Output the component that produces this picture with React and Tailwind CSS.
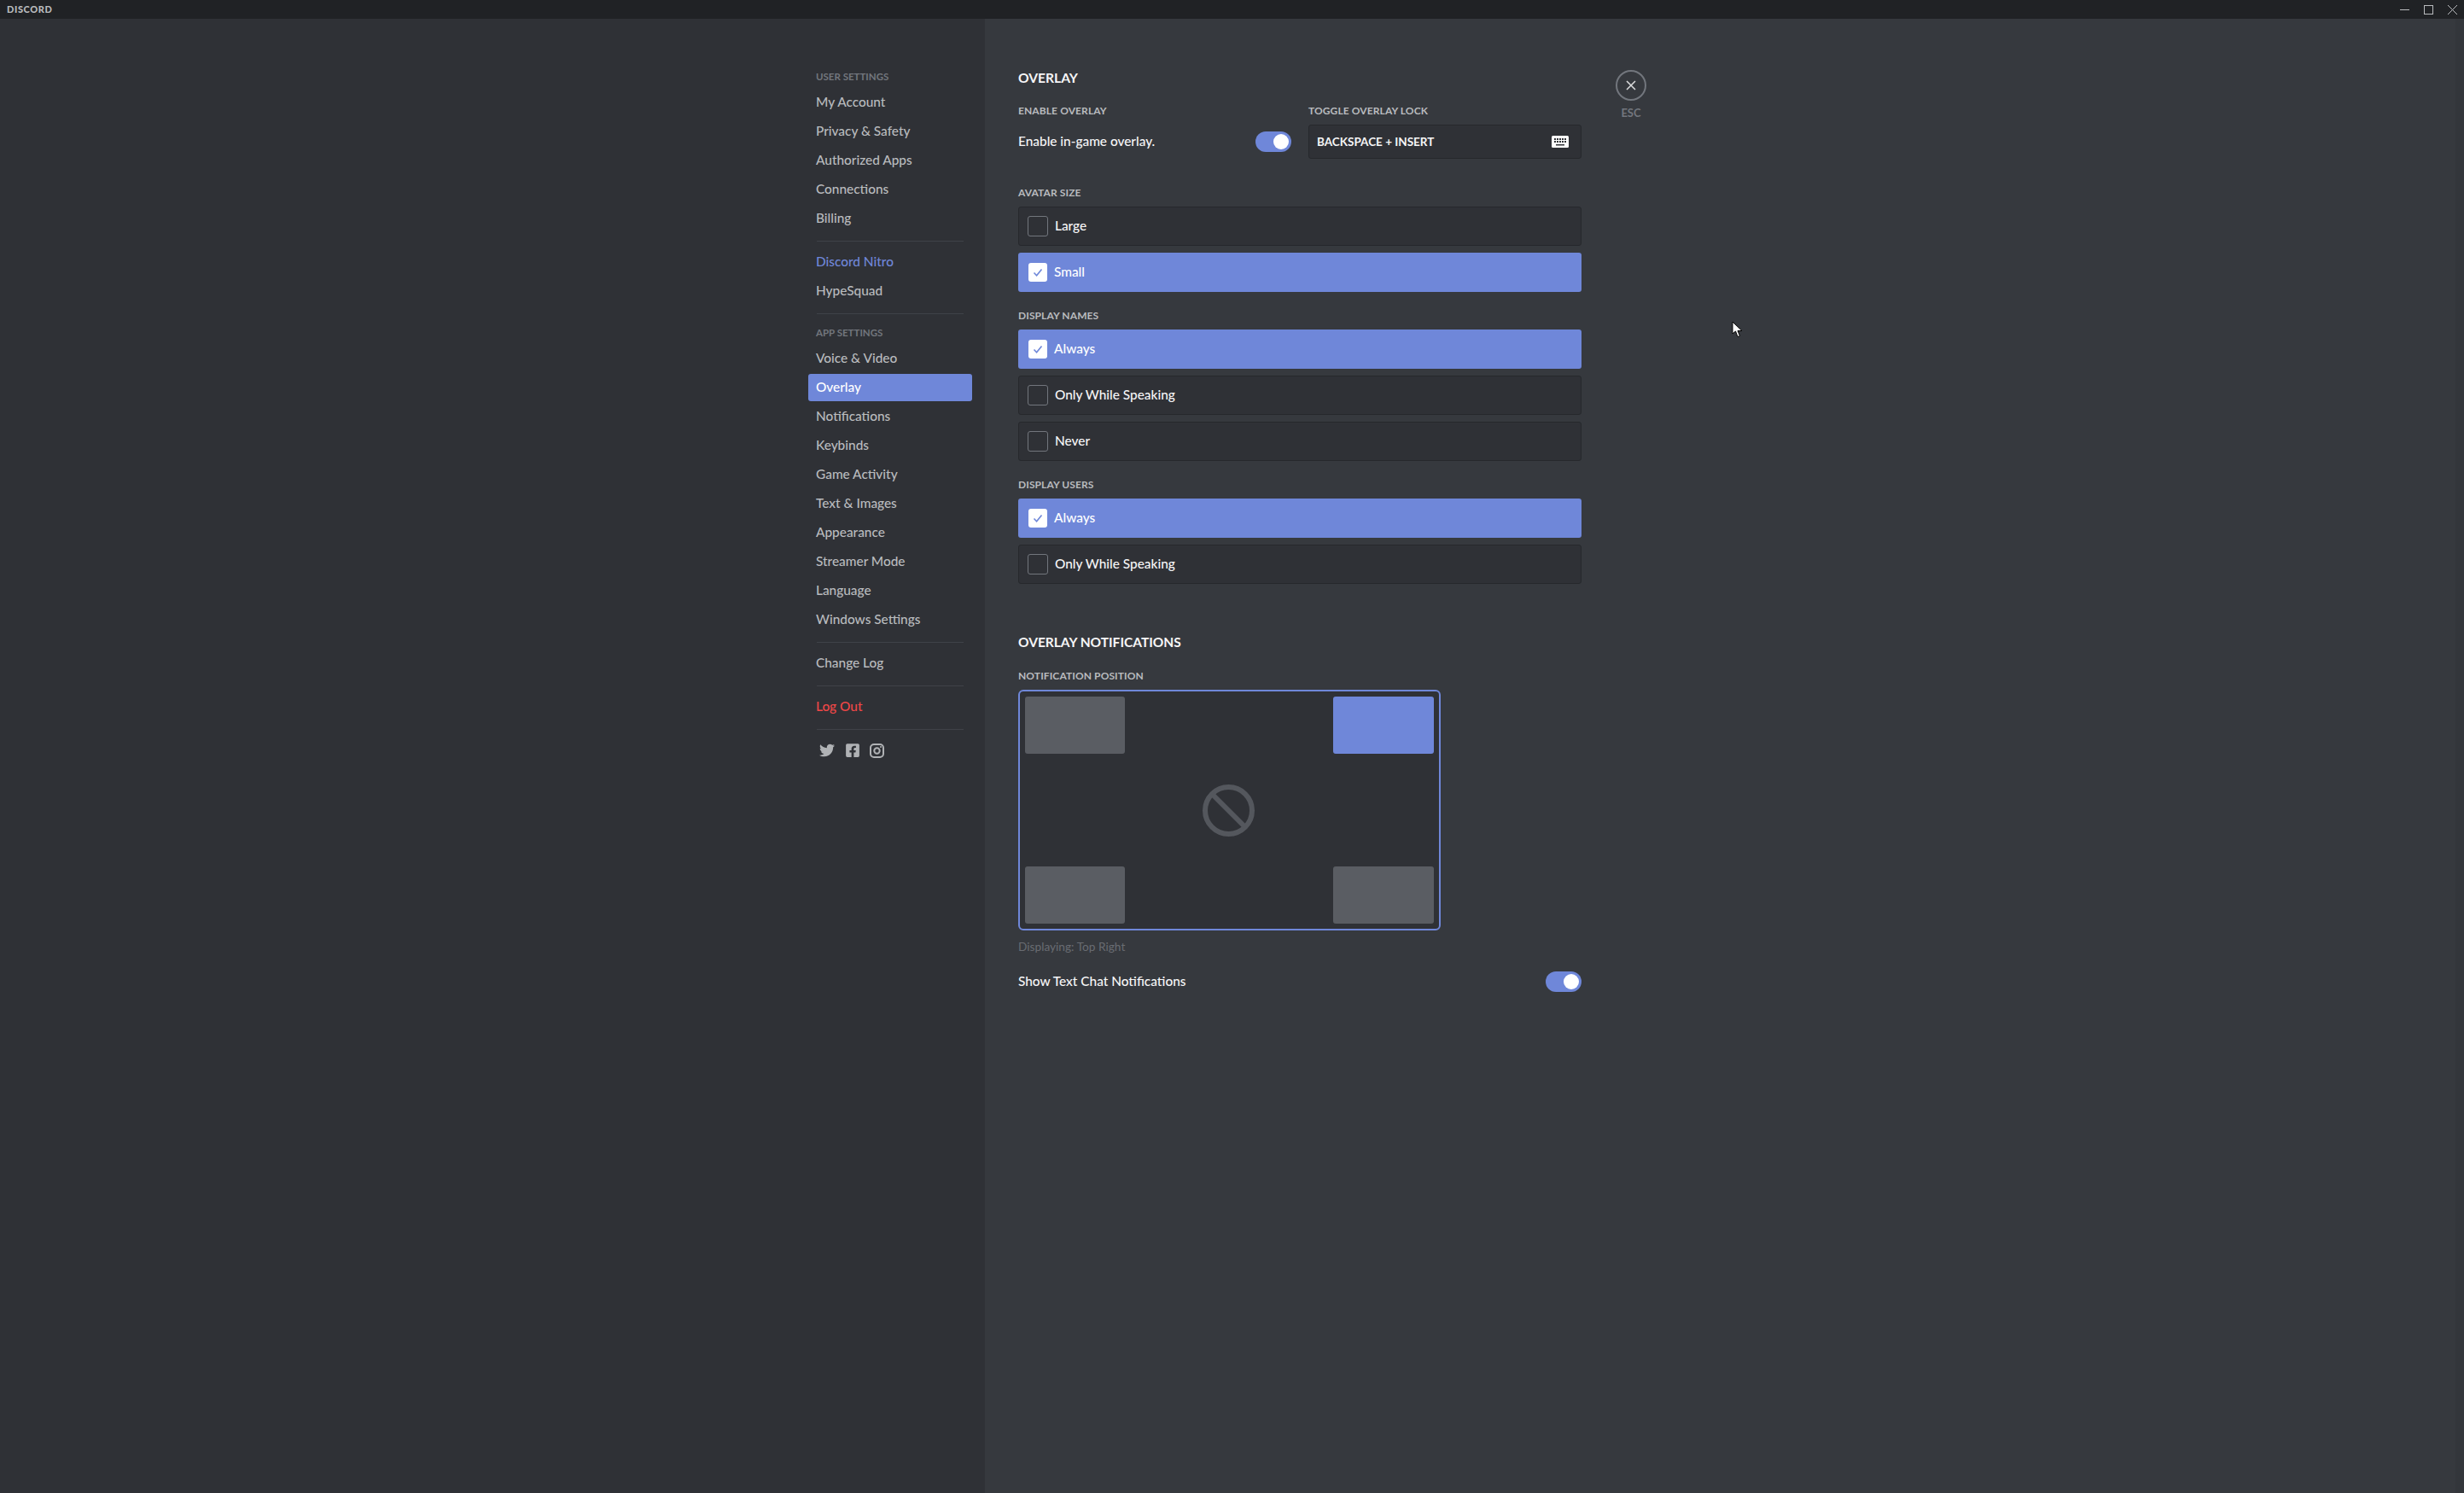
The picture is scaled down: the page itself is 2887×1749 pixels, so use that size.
import { FaTwitter, FaFacebookSquare } from "react-icons/fa";

const font = "font-['Lato','Noto_Sans',sans-serif]";

const userItems = ["My Account", "Privacy & Safety", "Authorized Apps", "Connections", "Billing"];
const appItems = [
  "Voice & Video",
  "Overlay",
  "Notifications",
  "Keybinds",
  "Game Activity",
  "Text & Images",
  "Appearance",
  "Streamer Mode",
  "Language",
  "Windows Settings",
];

const Divider = () => <div className="mx-[10px] my-2 h-px shrink-0 bg-[#3f4248]" />;

const SideHeader = ({ children }) => (
  <div className="flex h-7 items-center pl-[9px] text-[11.5px] font-bold uppercase text-[#72767d]">
    {children}
  </div>
);

const SideItem = ({ label, active, color = "text-[#b9bbbe]" }) => (
  <div
    className={`mb-[2px] flex h-8 items-center rounded-[3px] pb-px pl-[9px] text-[15.4px] font-medium ${
      active ? "bg-[#6f87d9] text-white" : color
    }`}
  >
    {label}
  </div>
);

const Label = ({ children }) => (
  <div className="flex h-4 items-center text-[12px] font-bold uppercase tracking-[0.1px] text-[#b9bbbe]">
    {children}
  </div>
);

const Toggle = () => (
  <div className="flex h-6 w-[42px] items-center justify-end rounded-full bg-[#6f87d9] pr-[3px]">
    <div className="size-[18px] rounded-full bg-white" />
  </div>
);

const Radio = ({ label, checked }) => (
  <div
    className={`mb-2 flex h-[46px] items-center rounded-[3px] text-[15.4px] font-medium ${
      checked ? "bg-[#6f87d9] pl-[12px] text-white" : "border border-[#26282c] bg-[#2f3136] pl-[10px] text-[#f6f6f7]"
    }`}
  >
    {checked ? (
      <div className="flex size-[22px] items-center justify-center rounded-[3px] bg-white">
        <svg width="14" height="14" viewBox="0 0 14 14" fill="none">
          <path d="M2.5 7.5 5.6 10.8 11.5 3.5" stroke="#6f87d9" strokeWidth="1.6" />
        </svg>
      </div>
    ) : (
      <div className="size-6 rounded-[3px] border border-[#72767d]" />
    )}
    <span className={`pb-px ${checked ? "ml-[8px]" : "ml-2"}`}>{label}</span>
  </div>
);

const PositionBox = ({ active }) => (
  <div className={`h-[67px] rounded-[3px] ${active ? "bg-[#6f87d9]" : "bg-[#5a5d63]"}`} />
);

const WinButton = ({ children }) => (
  <div className="flex h-[22px] w-[28px] items-center justify-center">{children}</div>
);

export default function App() {
  return (
    <div className={`relative flex h-[1749px] w-[2887px] flex-col overflow-hidden bg-[#36393e] ${font}`}>
      <div className="flex h-[22px] shrink-0 items-center justify-between bg-[#202225] pl-2">
        <div className="text-[11px] font-black uppercase tracking-[0.6px] text-[#b9bbbe]">Discord</div>
        <div className="flex">
          <WinButton>
            <svg width="11" height="11" viewBox="0 0 11 11">
              <path d="M0 5.5H11" stroke="#b9bbbe" strokeWidth="1" />
            </svg>
          </WinButton>
          <WinButton>
            <svg width="11" height="11" viewBox="0 0 11 11" fill="none">
              <rect x="0.5" y="0.5" width="10" height="10" stroke="#b9bbbe" />
            </svg>
          </WinButton>
          <WinButton>
            <svg width="11" height="11" viewBox="0 0 11 11">
              <path d="M0 0 11 11M11 0 0 11" stroke="#b9bbbe" strokeWidth="1" />
            </svg>
          </WinButton>
        </div>
      </div>

      <div className="flex min-h-0 flex-1">
        <aside className="flex w-[1154px] shrink-0 justify-end bg-[#2f3136] pr-[15px] pt-[54px]">
          <nav className="flex w-[192px] flex-col">
            <SideHeader>User Settings</SideHeader>
            {userItems.map((item) => (
              <SideItem key={item} label={item} />
            ))}
            <Divider />
            <SideItem label="Discord Nitro" color="text-[#6f87d9]" />
            <SideItem label="HypeSquad" />
            <Divider />
            <SideHeader>App Settings</SideHeader>
            {appItems.map((item) => (
              <SideItem key={item} label={item} active={item === "Overlay"} />
            ))}
            <Divider />
            <SideItem label="Change Log" />
            <Divider />
            <SideItem label="Log Out" color="text-[#f04747]" />
            <Divider />
            <div className="flex h-8 items-center pl-[13px] text-[#b0b2b5]">
              <FaTwitter className="size-[18px]" />
              <FaFacebookSquare className="ml-[12px] size-[18px]" />
              <svg className="ml-[11px]" width="17" height="17" viewBox="0 0 17 17" fill="none">
                <rect x="1" y="1" width="15" height="15" rx="4" stroke="currentColor" strokeWidth="2" />
                <circle cx="8.5" cy="8.5" r="3.2" stroke="currentColor" strokeWidth="2" />
                <circle cx="13" cy="4" r="1" fill="currentColor" />
              </svg>
            </div>
          </nav>
        </aside>

        <main className="flex flex-1 pl-[39px] pt-[60px]">
          <div className="w-[660px]">
            <div className="flex h-5 items-center text-[15.6px] font-bold uppercase text-[#f6f6f7]">Overlay</div>

            <div className="mt-[20px] flex">
              <div className="w-[320px]">
                <Label>Enable Overlay</Label>
                <div className="mt-2 flex h-10 items-center justify-between text-[15.4px] font-medium text-[#f6f6f7]">
                  <span className="pb-px">Enable in-game overlay.</span>
                  <Toggle />
                </div>
              </div>
              <div className="ml-[20px] w-[320px]">
                <Label>Toggle Overlay Lock</Label>
                <div className="mt-2 flex h-10 items-center justify-between rounded-[3px] border border-[#26282c] bg-[#2f3136] pl-[9px] pr-[14px]">
                  <span className="text-[13.5px] font-bold uppercase text-[#f6f6f7]">Backspace + Insert</span>
                  <svg width="20" height="14" viewBox="0 0 20 14">
                    <rect width="20" height="14" rx="1.5" fill="#fff" />
                    <path
                      d="M3 3h2v2H3zM6 3h2v2H6zM9 3h2v2H9zM12 3h2v2h-2zM15 3h2v2h-2zM3 6h2v2H3zM6 6h2v2H6zM9 6h2v2H9zM12 6h2v2h-2zM15 6h2v2h-2zM5 10h10v1.6H5z"
                      fill="#2f3136"
                    />
                  </svg>
                </div>
              </div>
            </div>

            <div className="mt-[32px]">
              <Label>Avatar Size</Label>
            </div>
            <div className="mt-2">
              <Radio label="Large" />
              <Radio label="Small" checked />
            </div>

            <div className="mt-[20px]">
              <Label>Display Names</Label>
            </div>
            <div className="mt-2">
              <Radio label="Always" checked />
              <Radio label="Only While Speaking" />
              <Radio label="Never" />
            </div>

            <div className="mt-[20px]">
              <Label>Display Users</Label>
            </div>
            <div className="mt-2">
              <Radio label="Always" checked />
              <Radio label="Only While Speaking" />
            </div>

            <div className="mt-[59px] flex h-5 items-center text-[15.5px] font-bold uppercase text-[#f6f6f7]">
              Overlay Notifications
            </div>
            <div className="mt-[21px]">
              <Label>Notification Position</Label>
            </div>

            <div className="relative mt-2 grid h-[282px] w-[495px] grid-cols-[117px_118px] content-between justify-between rounded-[6px] border-2 border-[#6f87d9] bg-[#2f3136] p-[6px]">
              <PositionBox />
              <PositionBox active />
              <PositionBox />
              <PositionBox />
              <svg className="absolute left-[214px] top-[109px]" width="61" height="61" viewBox="0 0 61 61" fill="none">
                <circle cx="30.5" cy="30.5" r="27.5" stroke="#54575d" strokeWidth="6" />
                <path d="M11 11 50 50" stroke="#54575d" strokeWidth="6" />
              </svg>
            </div>

            <div className="mt-[9px] flex h-5 items-center text-[13.7px] text-[#696c72]">Displaying: Top Right</div>
            <div className="mt-[19px] flex h-6 items-center justify-between text-[15.4px] font-medium text-[#f6f6f7]">
              <span className="pb-px">Show Text Chat Notifications</span>
              <Toggle />
            </div>
          </div>

          <div className="ml-[40px] flex w-[36px] flex-col items-center">
            <div className="flex size-[36px] items-center justify-center rounded-full border-2 border-[#72767d]">
              <svg width="12" height="12" viewBox="0 0 12 12">
                <path d="M1 1 11 11M11 1 1 11" stroke="#dcddde" strokeWidth="1.5" />
              </svg>
            </div>
            <div className="mt-[5px] text-[13px] font-bold text-[#72767d]">ESC</div>
          </div>
        </main>

        <div className="w-[10px] shrink-0 bg-[#33363b]" />
      </div>

      <svg className="absolute left-[2029px] top-[376px]" width="14" height="20" viewBox="0 0 14 20">
        <path d="M1 1V15L4.5 12 7 18.5 9.5 17.5 7 11.5H12Z" fill="#fff" stroke="#000" strokeWidth="1" />
      </svg>
    </div>
  );
}
